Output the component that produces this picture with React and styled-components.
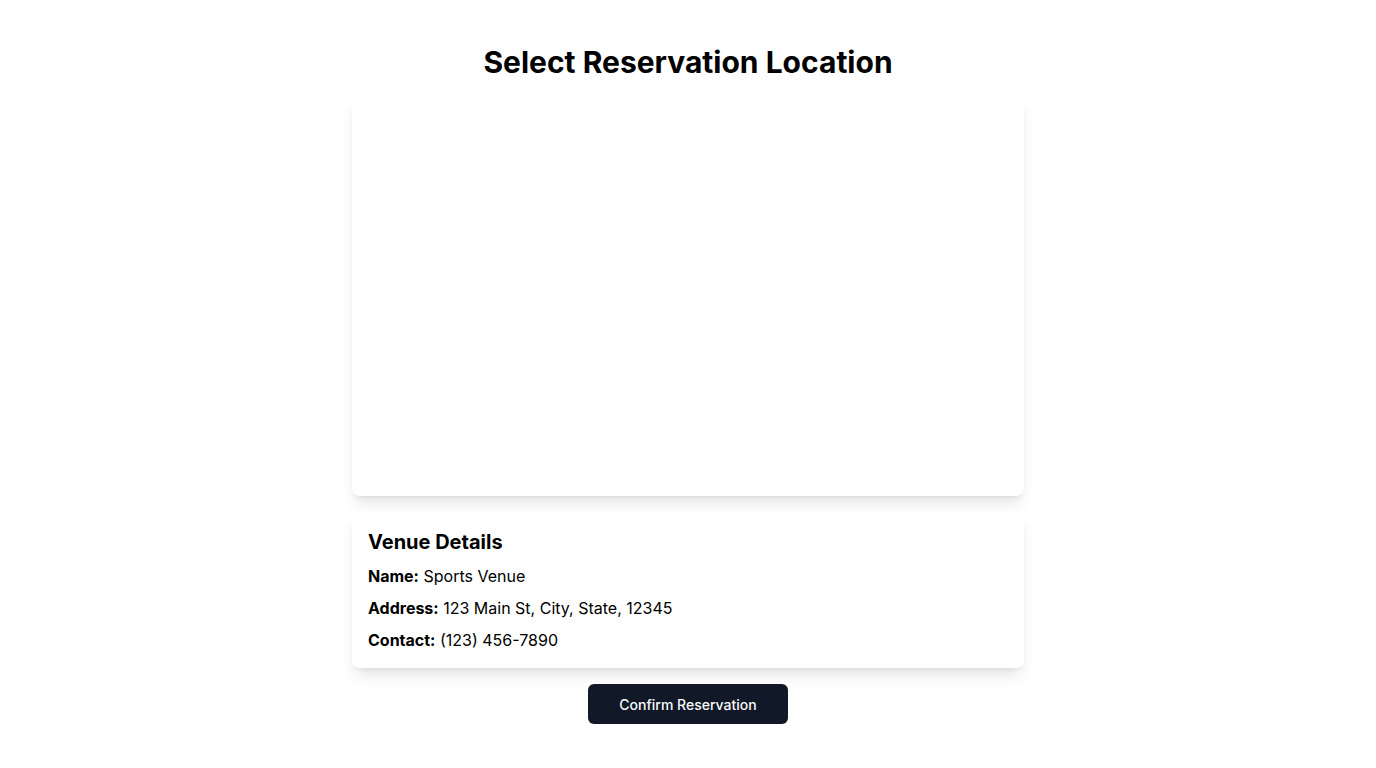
import React from 'react';
import styled, { createGlobalStyle } from 'styled-components';

const GlobalStyle = createGlobalStyle`
  * {
    box-sizing: border-box;
  }
  body {
    margin: 0;
    background: #ffffff;
    font-family: Inter, "Noto Sans", sans-serif;
    color: #000000;
  }
`;

const venue = {
  name: 'Sports Venue',
  address: '123 Main St, City, State, 12345',
  contact: '(123) 456-7890'
};

export default function App() {
  return (
    <>
      <GlobalStyle />
      <Page>
        <Title>Select Reservation Location</Title>
        <MapCard />
        <DetailsCard>
          <DetailsTitle>Venue Details</DetailsTitle>
          <DetailLine>
            <strong>Name:</strong> {venue.name}
          </DetailLine>
          <DetailLine>
            <strong>Address:</strong> {venue.address}
          </DetailLine>
          <DetailLine>
            <strong>Contact:</strong> {venue.contact}
          </DetailLine>
        </DetailsCard>
        <ConfirmButton>Confirm Reservation</ConfirmButton>
      </Page>
    </>
  );
}

const Page = styled.div`
  width: 672px;
  margin: 0 auto;
  padding-top: 44px;
  display: flex;
  flex-direction: column;
  align-items: center;
`;

const Title = styled.h1`
  margin: 0 0 16px;
  font-size: 30px;
  line-height: 36px;
  font-weight: 700;
  text-align: center;
`;

const Card = styled.div`
  width: 100%;
  background: #ffffff;
  border-radius: 8px;
  box-shadow: 0 10px 15px -3px rgba(0, 0, 0, 0.1), 0 4px 6px -4px rgba(0, 0, 0, 0.1);
`;

const MapCard = styled(Card)`
  height: 400px;
`;

const DetailsCard = styled(Card)`
  margin-top: 16px;
  padding: 16px;
  display: flex;
  flex-direction: column;
  gap: 8px;
`;

const DetailsTitle = styled.h2`
  margin: 0;
  font-size: 20px;
  line-height: 28px;
  font-weight: 700;
`;

const DetailLine = styled.p`
  margin: 0;
  font-size: 16px;
  line-height: 24px;

  strong {
    font-weight: 700;
  }
`;

const ConfirmButton = styled.button`
  margin-top: 16px;
  width: 200px;
  height: 40px;
  border: none;
  border-radius: 6px;
  background: #111827;
  color: #f9fafb;
  font-family: Inter, "Noto Sans", sans-serif;
  font-size: 14px;
  font-weight: 500;
  cursor: pointer;
`;
